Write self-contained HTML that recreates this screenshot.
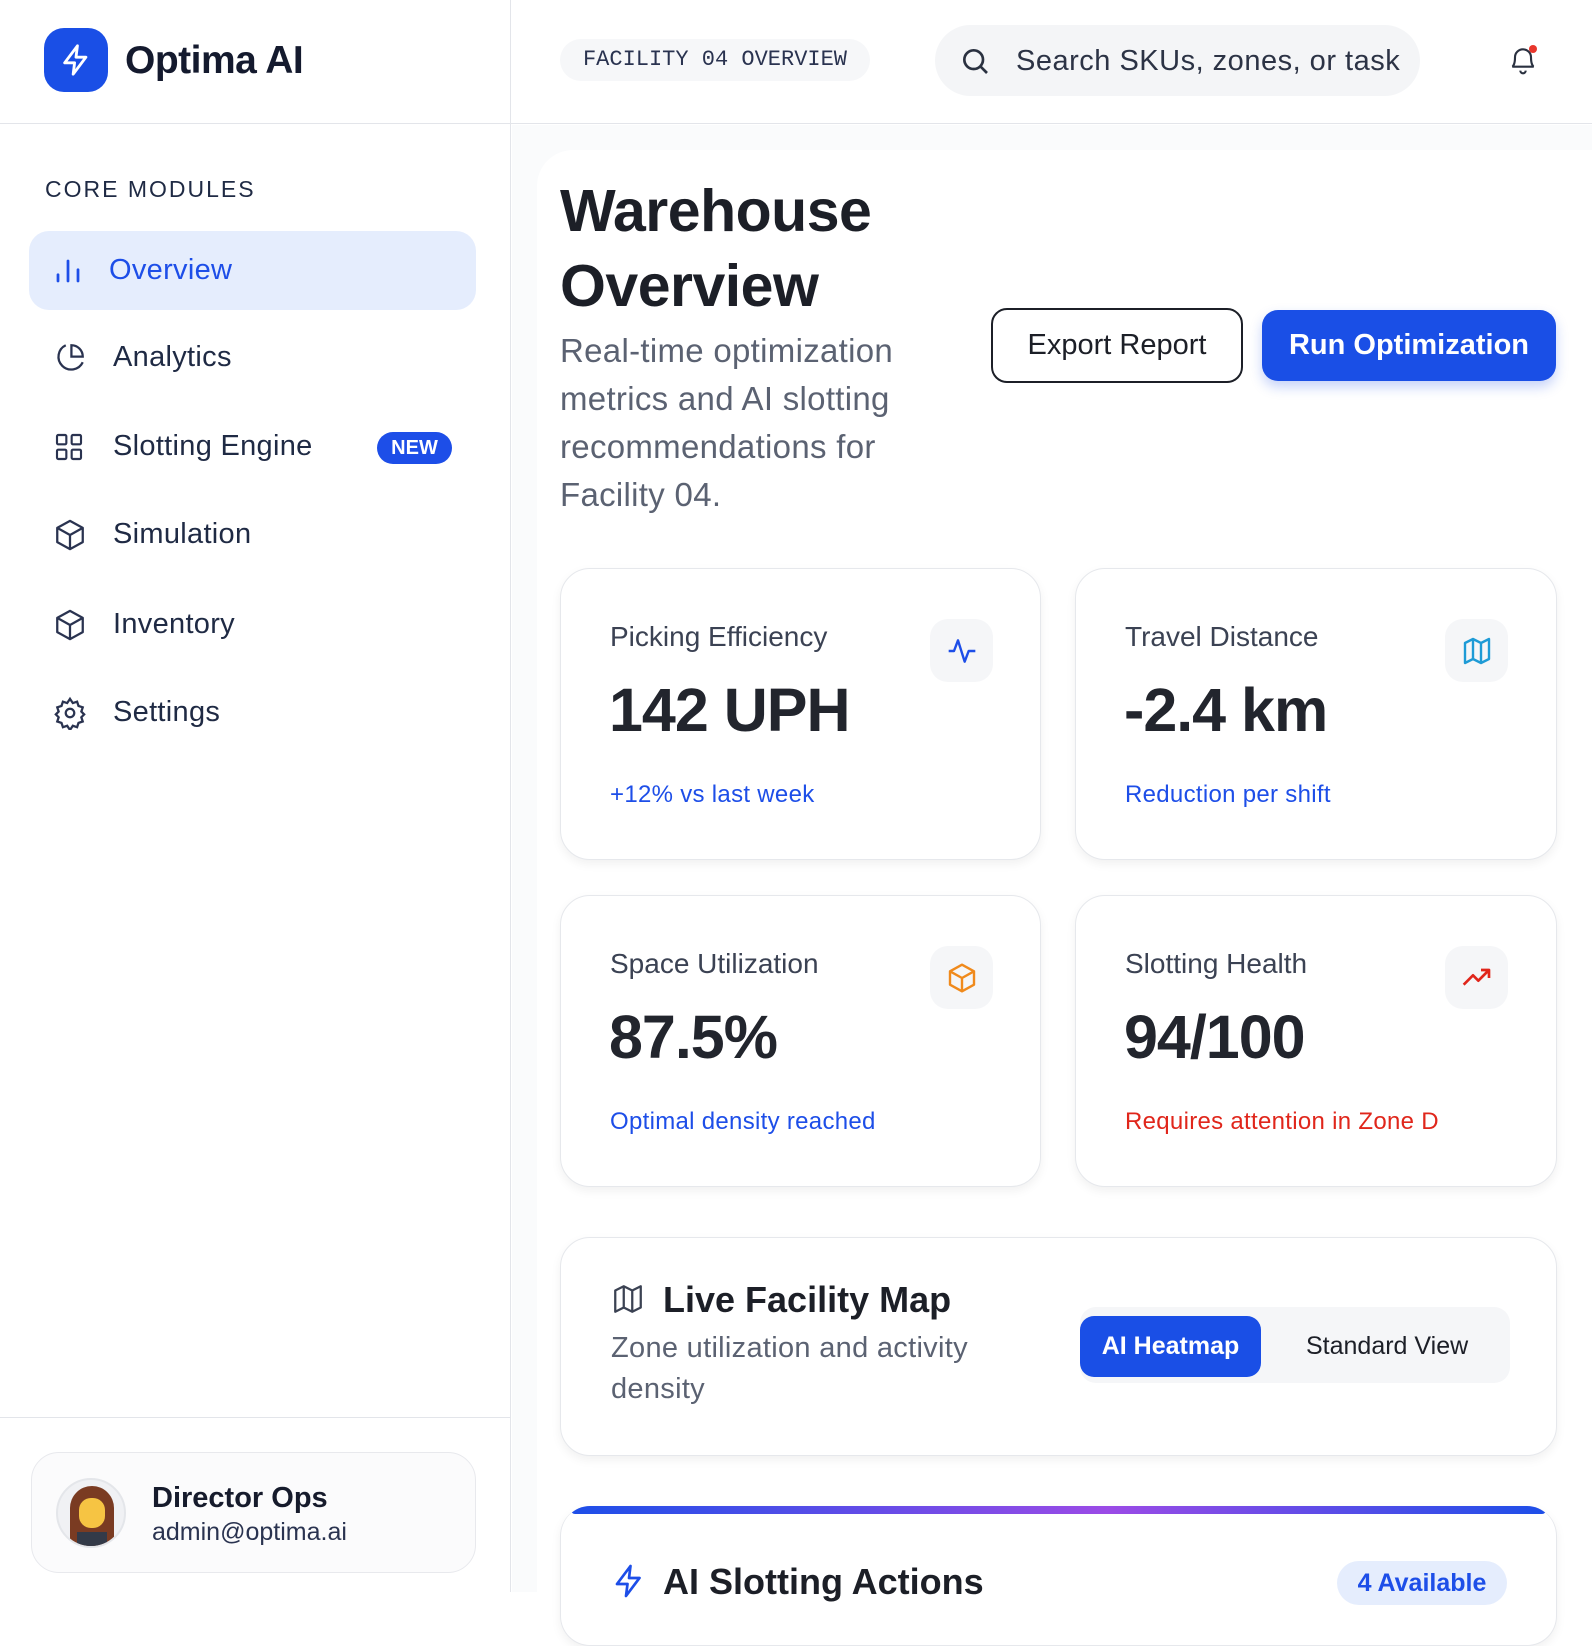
<!DOCTYPE html>
<html><head><meta charset="utf-8"><style>
*{box-sizing:border-box;margin:0;padding:0}
body{width:1592px;height:1592px;overflow:hidden;background:#fff;font-family:"Liberation Sans",sans-serif;color:#1e2330;position:relative}
.abs{position:absolute}
.side{left:0;top:0;width:511px;height:1592px;border-right:1px solid #e3e5ea;background:#fff}
.hdr{left:0;top:0;width:1592px;height:124px;border-bottom:1px solid #e3e5ea}
.main{left:512px;top:125px;width:1080px;height:1467px;background:#fafbfc}
.nav{position:absolute;left:29px;width:447px;height:79px;display:flex;align-items:center;padding-left:24px;font-size:29px;color:#1f2a44;border-radius:20px;letter-spacing:.3px}
.nav svg{margin-right:26px}
.card{position:absolute;background:#fff;border:1px solid #e6e8ec;border-radius:30px;box-shadow:0 4px 10px rgba(0,0,0,.06)}
.lbl{position:absolute;left:49px;top:52px;font-size:28px;color:#3b4253}
.val{position:absolute;left:48px;top:106px;font-size:61px;font-weight:bold;color:#22252d;letter-spacing:-1px}
.sub{position:absolute;left:49px;top:212px;font-size:24px;color:#1d4ee8;letter-spacing:.3px}
.ic{position:absolute;left:369px;top:50px;width:63px;height:63px;border-radius:18px;background:#f5f6f8;display:flex;align-items:center;justify-content:center}
</style></head><body>
<div class="abs main"></div>
<div class="abs side"></div>
<div class="abs hdr"></div>
<div class="abs" style="left:44px;top:28px;width:64px;height:64px;border-radius:20px;background:#1a4fe6;display:flex;align-items:center;justify-content:center">
<svg width="34" height="34" viewBox="0 0 24 24" fill="none" stroke="#fff" stroke-width="2" stroke-linejoin="round"><path d="M13 2L4 14h7l-1 8 9-12h-7l1-8z"/></svg></div>
<div class="abs" style="left:125px;top:39px;font-size:39px;font-weight:bold;color:#141a2e;letter-spacing:-0.5px">Optima AI</div>
<div class="abs" style="left:560px;top:39px;width:310px;height:42px;border-radius:21px;background:#f6f7f9;font-family:'Liberation Mono',monospace;font-size:22px;color:#2a3350;line-height:42px;text-align:center">FACILITY 04 OVERVIEW</div>
<div class="abs" style="left:935px;top:25px;width:485px;height:71px;border-radius:36px;background:#f4f5f7"></div>
<svg class="abs" style="left:959px;top:45px" width="32" height="32" viewBox="0 0 24 24" fill="none" stroke="#2a3140" stroke-width="2"><circle cx="11" cy="11" r="7"/><path d="M16 16l5 5"/></svg>
<div class="abs" style="left:1016px;top:45px;font-size:29px;color:#2c3345;letter-spacing:.5px">Search SKUs, zones, or task</div>
<svg class="abs" style="left:1507px;top:44px" width="32" height="32" viewBox="0 0 24 24" fill="none" stroke="#2a3140" stroke-width="1.6"><path d="M6 10a6 6 0 0 1 12 0c0 6 2 7 2 7H4s2-1 2-7"/><path d="M10 20a2 2 0 0 0 4 0"/></svg>
<div class="abs" style="left:1529px;top:45px;width:8px;height:8px;border-radius:50%;background:#e8362c"></div>
<div class="abs" style="left:45px;top:176px;font-size:23px;letter-spacing:2px;color:#1f2a44">CORE MODULES</div>
<div class="nav" style="top:231px;background:#e5edfd;color:#1d4ee8">
<svg width="30" height="30" viewBox="0 0 24 24" stroke="#1d4ee8" stroke-width="2.2" stroke-linecap="round"><path d="M4 20v-5M12 20V4M20 20v-9"/></svg>Overview</div>
<div class="nav" style="top:318px"><svg width="34" height="34" viewBox="0 0 24 24" fill="none" stroke="#2a3350" stroke-width="1.6"><path d="M21 15A9 9 0 1 1 9 3"/><path d="M13 3a8 8 0 0 1 8 8h-8z"/></svg>Analytics</div>
<div class="nav" style="top:407px"><svg width="32" height="32" viewBox="0 0 24 24" fill="none" stroke="#2a3350" stroke-width="1.6" style="margin-right:28px"><rect x="3" y="3" width="7" height="7" rx="1"/><rect x="14" y="3" width="7" height="7" rx="1"/><rect x="3" y="14" width="7" height="7" rx="1"/><rect x="14" y="14" width="7" height="7" rx="1"/></svg>Slotting Engine</div>
<div class="abs" style="left:377px;top:432px;width:75px;height:32px;border-radius:16px;background:#1d4ee8;color:#fff;font-size:20px;font-weight:bold;text-align:center;line-height:32px">NEW</div>
<div class="nav" style="top:495px"><svg width="34" height="34" viewBox="0 0 24 24" fill="none" stroke="#2a3350" stroke-width="1.6" stroke-linejoin="round"><path d="M12 2l9 5v10l-9 5-9-5V7z"/><path d="M3 7l9 5 9-5M12 12v10"/></svg>Simulation</div>
<div class="nav" style="top:585px"><svg width="34" height="34" viewBox="0 0 24 24" fill="none" stroke="#2a3350" stroke-width="1.6" stroke-linejoin="round"><path d="M12 2l9 5v10l-9 5-9-5V7z"/><path d="M3 7l9 5 9-5M12 12v10"/></svg>Inventory</div>
<div class="nav" style="top:673px"><svg width="34" height="34" viewBox="0 0 24 24" fill="none" stroke="#2a3350" stroke-width="1.6"><circle cx="12" cy="12" r="3"/><path d="M12 2l2 3 3-1 1 3 3 1-1 3 2 2-2 2 1 3-3 1-1 3-3-1-2 3-2-3-3 1-1-3-3-1 1-3-2-2 2-2-1-3 3-1 1-3 3 1z"/></svg>Settings</div>
<div class="abs" style="left:0;top:1417px;width:511px;border-top:1px solid #e3e5ea"></div>
<div class="abs" style="left:31px;top:1452px;width:445px;height:121px;border-radius:28px;border:1px solid #e8e9ed;background:#fbfbfc"></div>
<div class="abs" style="left:56px;top:1478px;width:70px;height:70px;border-radius:50%;background:#f0f1f4;overflow:hidden;border:2px solid #e4e6ea">
<div style="position:absolute;left:12px;top:6px;width:44px;height:60px;border-radius:22px 22px 6px 6px;background:#7a3b22"></div>
<div style="position:absolute;left:21px;top:18px;width:26px;height:30px;border-radius:12px;background:#f6c443"></div>
<div style="position:absolute;left:19px;top:52px;width:30px;height:20px;background:#333a48"></div></div>
<div class="abs" style="left:152px;top:1482px;font-size:29px;font-weight:bold;color:#161b2c">Director Ops</div>
<div class="abs" style="left:152px;top:1518px;font-size:25px;color:#2a3350">admin@optima.ai</div>
<div class="abs" style="left:537px;top:150px;width:1055px;height:1442px;border-radius:36px 0 0 0;background:#fff"></div>
<div class="abs" style="left:560px;top:174px;font-size:59px;font-weight:bold;line-height:75px;color:#1c1f27;letter-spacing:-0.5px">Warehouse<br>Overview</div>
<div class="abs" style="left:560px;top:327px;width:390px;font-size:33px;line-height:48px;color:#5b6272;letter-spacing:.3px">Real-time optimization metrics and AI slotting recommendations for Facility 04.</div>
<div class="abs" style="left:991px;top:308px;width:252px;height:75px;border:2px solid #1c1f27;border-radius:16px;font-size:29px;text-align:center;line-height:71px;color:#1c1f27">Export Report</div>
<div class="abs" style="left:1262px;top:310px;width:294px;height:71px;border-radius:16px;background:#1a4fe6;font-size:29px;font-weight:bold;text-align:center;line-height:71px;color:#fff;box-shadow:0 6px 12px rgba(26,79,230,.25)">Run Optimization</div>
<div class="card" style="left:560px;top:568px;width:481px;height:292px"><div class="lbl">Picking Efficiency</div><div class="val">142 UPH</div><div class="sub">+12% vs last week</div>
<div class="ic"><svg width="32" height="32" viewBox="0 0 24 24" fill="none" stroke="#1d4ee8" stroke-width="1.8" stroke-linejoin="round"><path d="M2 12h4l3-8 5 16 3-8h5"/></svg></div></div>
<div class="card" style="left:1075px;top:568px;width:482px;height:292px"><div class="lbl">Travel Distance</div><div class="val">-2.4 km</div><div class="sub">Reduction per shift</div>
<div class="ic"><svg width="32" height="32" viewBox="0 0 24 24" fill="none" stroke="#1e9bd6" stroke-width="1.8" stroke-linejoin="round"><path d="M3 6l6-3 6 3 6-3v15l-6 3-6-3-6 3zM9 3v15M15 6v15"/></svg></div></div>
<div class="card" style="left:560px;top:895px;width:481px;height:292px"><div class="lbl">Space Utilization</div><div class="val">87.5%</div><div class="sub">Optimal density reached</div>
<div class="ic"><svg width="32" height="32" viewBox="0 0 24 24" fill="none" stroke="#f08a1c" stroke-width="1.8" stroke-linejoin="round"><path d="M12 2l9 5v10l-9 5-9-5V7z"/><path d="M3 7l9 5 9-5M12 12v10"/></svg></div></div>
<div class="card" style="left:1075px;top:895px;width:482px;height:292px"><div class="lbl">Slotting Health</div><div class="val">94/100</div><div class="sub" style="color:#e0261b">Requires attention in Zone D</div>
<div class="ic"><svg width="32" height="32" viewBox="0 0 24 24" fill="none" stroke="#e0261b" stroke-width="2" stroke-linejoin="round"><path d="M2 17l7-7 4 4 8-8M15 6h6v6"/></svg></div></div>
<div class="card" style="left:560px;top:1237px;width:997px;height:219px">
<svg class="abs" style="left:50px;top:44px" width="34" height="34" viewBox="0 0 24 24" fill="none" stroke="#3b4253" stroke-width="1.6" stroke-linejoin="round"><path d="M3 6l6-3 6 3 6-3v15l-6 3-6-3-6 3zM9 3v15M15 6v15"/></svg>
<div class="abs" style="left:102px;top:41px;font-size:36px;font-weight:bold;color:#1c1f27">Live Facility Map</div>
<div class="abs" style="left:50px;top:90px;width:400px;font-size:29px;line-height:41px;color:#5b6272;letter-spacing:.3px">Zone utilization and activity density</div>
<div class="abs" style="left:519px;top:69px;width:430px;height:76px;border-radius:16px;background:#f5f6f8"></div>
<div class="abs" style="left:519px;top:78px;width:181px;height:61px;border-radius:14px;background:#1a4fe6;color:#fff;font-size:25px;font-weight:bold;text-align:center;line-height:61px">AI Heatmap</div>
<div class="abs" style="left:745px;top:78px;font-size:25px;line-height:61px;color:#1c1f27">Standard View</div></div>
<div class="card" style="left:560px;top:1506px;width:997px;height:140px;border-top:none;overflow:hidden">
<div style="position:absolute;left:10px;top:0;right:10px;height:8px;background:linear-gradient(90deg,#1d4ee8,#9b4be6 55%,#1d4ee8);border-radius:4px"></div>
<svg class="abs" style="left:50px;top:57px" width="36" height="36" viewBox="0 0 24 24" fill="none" stroke="#1d4ee8" stroke-width="1.8" stroke-linejoin="round"><path d="M13 2L4 14h7l-1 8 9-12h-7l1-8z"/></svg>
<div class="abs" style="left:102px;top:55px;font-size:36px;font-weight:bold;color:#1c1f27">AI Slotting Actions</div>
<div class="abs" style="left:776px;top:55px;width:170px;height:44px;border-radius:22px;background:#e5edfd;color:#1d4ee8;font-size:25px;font-weight:bold;text-align:center;line-height:44px">4 Available</div></div>
</body></html>
